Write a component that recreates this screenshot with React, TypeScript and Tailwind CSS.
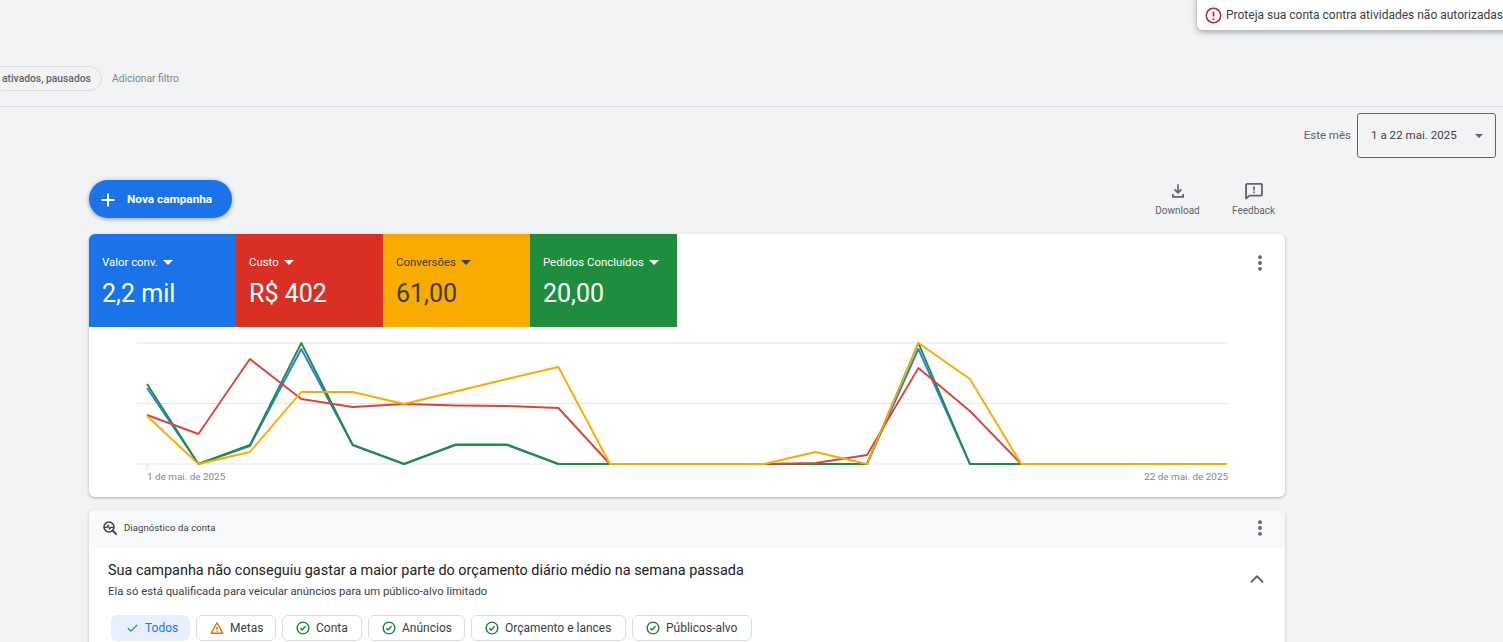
import React from "react";
import { Check, ChevronUp, MoreVertical, Plus } from "lucide-react";

const W = 51.4286;
const xs = Array.from({ length: 22 }, (_, i) => 147 + i * W);
const tail = (n: number) => Array.from({ length: n }, () => 464);
const series: { c: string; y: number[] }[] = [
  { c: "#2b7de9", y: [388, 464, 446, 349, 445, 464, 445, 445, 464, 464, 464, 464, 464, 464, 464, 349, 464, ...tail(5)] },
  { c: "#1e8e3e", y: [384, 464, 445, 343, 445, 464, 444.5, 444.5, 464, 464, 464, 464, 464, 464, 464, 343, 464, ...tail(5)] },
  { c: "#d9453a", y: [415, 434, 359, 399, 407, 404, 405.5, 406, 408, 464, 464, 464, 464, 463, 455, 368, 411, ...tail(5)] },
  { c: "#f9ab00", y: [416, 464, 452, 392, 392, 404, 391.5, 379, 367, 464, 464, 464, 464, 452, 464, 343, 379, ...tail(5)] },
];

function Tile({ label, value, bg, dark }: { label: string; value: string; bg: string; dark?: boolean }) {
  return (
    <div className={`w-[147px] h-[93px] pl-[13px] pt-[21px] ${bg} ${dark ? "text-[#3c4043]" : "text-white"}`}>
      <div className="flex items-center h-[14px] text-[11.4px] leading-[14px]">
        {label}
        <span className={`ml-[5px] w-0 h-0 border-x-[5px] border-x-transparent border-t-[5px] ${dark ? "border-t-[#3c4043]" : "border-t-white"}`} />
      </div>
      <div className="mt-[9px] text-[25px] leading-[32px]">{value}</div>
    </div>
  );
}

function CircleCheck() {
  return (
    <svg width="14" height="14" viewBox="0 0 24 24" fill="none" stroke="#188038" strokeWidth="2.4" className="shrink-0">
      <circle cx="12" cy="12" r="10" />
      <path d="M7.5 12.5l3 3 6-6.5" />
    </svg>
  );
}

function Chip({ label, icon, width }: { label: string; icon: React.ReactNode; width: string }) {
  return (
    <div className={`h-[26px] ${width} pl-[13px] flex items-center gap-[6px] bg-white border border-[#dadce0] rounded-[6px] text-[12px] text-[#3c4043] whitespace-nowrap`}>
      {icon}
      {label}
    </div>
  );
}

export default function App() {
  return (
    <div className="relative w-[1503px] h-[642px] overflow-hidden bg-[#f1f3f4] text-[#3c4043]" style={{ fontFamily: "Roboto, sans-serif" }}>
      {/* toast */}
      <div className="absolute left-[1197px] -top-[10px] w-[330px] h-[40px] pt-[10px] bg-white rounded-[6px] shadow-[0_2px_6px_rgba(60,64,67,0.45)] flex items-center pl-[8px]">
        <svg width="17" height="17" viewBox="0 0 24 24" fill="none" className="shrink-0">
          <circle cx="12" cy="12" r="10.2" stroke="#c5221f" strokeWidth="2.2" />
          <path d="M12 6.5v7" stroke="#c5221f" strokeWidth="2.4" />
          <circle cx="12" cy="16.8" r="1.4" fill="#c5221f" />
        </svg>
        <span className="ml-[4px] text-[12px] text-[#3c4043] whitespace-nowrap">Proteja sua conta contra atividades não autorizadas</span>
      </div>

      {/* filter bar */}
      <div className="h-[107px] border-b border-[#dadce0] pt-[66px]">
        <div className="flex items-center h-[25px]">
          <div className="-ml-[10px] h-[25px] w-[112px] pl-[11px] flex items-center border border-[#dadce0] rounded-full text-[10.3px] font-medium text-[#5f6368] whitespace-nowrap">
            ativados, pausados
          </div>
          <span className="ml-[10px] text-[10.3px] text-[#80868b]">Adicionar filtro</span>
        </div>
      </div>

      {/* date row */}
      <div className="h-[51px] pt-[6px] pr-[7px] flex justify-end items-start">
        <span className="mt-[15px] mr-[6px] text-[11.5px] leading-[14px] text-[#5f6368]">Este mês</span>
        <div className="w-[139px] h-[45px] pl-[13px] pr-[12px] flex items-center justify-between border border-[#5f6368] rounded-[3px] text-[11.5px] text-[#3c4043] tracking-[0.05px]">
          1 a 22 mai. 2025
          <span className="w-0 h-0 border-x-[4px] border-x-transparent border-t-[4px] border-t-[#5f6368]" />
        </div>
      </div>

      <div className="w-[1196px] ml-[89px]">
        {/* actions */}
        <div className="h-[76px] pt-[22px] flex justify-between items-start">
          <button className="w-[143px] h-[38px] pl-[9px] pt-[1px] flex items-center gap-[9px] bg-[#1a73e8] rounded-full text-white text-[11.8px] font-bold shadow-[0_1px_4px_rgba(60,64,67,0.5)]">
            <Plus size={20} strokeWidth={2.4} />
            Nova campanha
          </button>
          <div className="flex gap-[31px] pr-[9px] pt-[2px] text-[#5f6368]">
            <div className="flex flex-col items-center w-[45px]">
              <svg width="18" height="18" viewBox="0 0 24 24" fill="#5f6368">
                <path d="M12 16 6.500 10.500l1.600-1.600 2.750 2.750V3h2.300v8.650l2.750-2.750 1.600 1.600L12 16ZM4 21v-5h2.300v2.700h11.400V16H20v5H4Z" />
              </svg>
              <span className="mt-[4px] text-[10px] leading-[14px]">Download</span>
            </div>
            <div className="flex flex-col items-center w-[45px]">
              <svg width="20" height="20" viewBox="0 0 24 24" fill="none" className="-mt-[1px]">
                <path d="M3.500 3.500h17a1 1 0 0 1 1 1v12a1 1 0 0 1-1 1H6.500l-4 3.500V4.500a1 1 0 0 1 1-1Z" stroke="#5f6368" strokeWidth="2.200" strokeLinejoin="round" />
                <path d="M11 6.500h2v5h-2v-5Zm0 6.200h2v2h-2v-2Z" fill="#5f6368" />
              </svg>
              <span className="mt-[3px] text-[10px] leading-[14px]">Feedback</span>
            </div>
          </div>
        </div>

        {/* chart card */}
        <div className="relative h-[263px] bg-white rounded-[6px] overflow-hidden shadow-[0_1px_3px_rgba(60,64,67,0.4)]">
          <div className="flex">
            <Tile label="Valor conv." value="2,2 mil" bg="bg-[#1a73e8]" />
            <Tile label="Custo" value="R$ 402" bg="bg-[#d93025]" />
            <Tile label="Conversões" value="61,00" bg="bg-[#f9ab00]" dark />
            <Tile label="Pedidos Concluídos" value="20,00" bg="bg-[#1e8e3e]" />
            <div className="flex-1 flex justify-end pt-[19px] pr-[15px]">
              <MoreVertical size={20} strokeWidth={2.6} className="text-[#5f6368]" />
            </div>
          </div>
          <svg width="1196" height="170" viewBox="89 327 1196 170" className="block" fill="none">
            {[343, 403.5, 464].map((y) => (
              <line key={y} x1="137" x2="1227" y1={y} y2={y} stroke="#e3e5e8" strokeWidth="1" />
            ))}
            <line x1="147" x2="147" y1="464" y2="470" stroke="#dadce0" />
            {series.map((s) => (
              <polyline
                key={s.c}
                points={s.y.map((y, i) => `${xs[i].toFixed(1)},${y}`).join(" ")}
                stroke={s.c}
                strokeWidth="1.9"
                strokeLinejoin="round"
              />
            ))}
          </svg>
          <div className="absolute left-[58px] right-[57px] top-[236px] flex justify-between text-[9.9px] leading-[14px] text-[#80868b]">
            <span>1 de mai. de 2025</span>
            <span>22 de mai. de 2025</span>
          </div>
        </div>

        {/* diagnostics card */}
        <div className="mt-[13px] h-[200px] bg-white rounded-t-[6px] shadow-[0_1px_3px_rgba(60,64,67,0.3)]">
          <div className="h-[38px] pl-[13px] pr-[15px] pb-[2px] flex items-center bg-[#f8f9fa] rounded-t-[6px]">
            <svg width="16" height="16" viewBox="0 0 24 24" fill="none" stroke="#3c4043" strokeWidth="2.400">
              <circle cx="10.500" cy="10.500" r="7.500" />
              <path d="M16 16l6 6" strokeWidth="3" />
              <path d="M4 11h3.500l1.500-3 2.500 5.500 1.500-2.500h3.500" strokeWidth="1.800" />
            </svg>
            <span className="ml-[6px] text-[9.5px] text-[#3c4043] tracking-[0.1px]">Diagnóstico da conta</span>
            <MoreVertical size={20} strokeWidth={2.6} className="ml-auto text-[#5f6368]" />
          </div>
          <div className="relative pl-[19px] pt-[14px]">
            <div className="text-[14.43px] leading-[18px] text-[#202124]">Sua campanha não conseguiu gastar a maior parte do orçamento diário médio na semana passada</div>
            <div className="mt-[5px] text-[11.3px] leading-[14px] text-[#3c4043]">Ela só está qualificada para veicular anúncios para um público-alvo limitado</div>
            <ChevronUp size={22} strokeWidth={2} className="absolute right-[17px] top-[20px] text-[#5f6368]" />
            <div className="mt-[16px] ml-[3px] flex gap-[6px]">
              <div className="h-[26px] w-[79px] pl-[15px] flex items-center gap-[6px] bg-[#e8f0fe] rounded-[6px] text-[12px] text-[#1a73e8]">
                <Check size={13} strokeWidth={2} />
                Todos
              </div>
              <Chip
                width="w-[80px]"
                label="Metas"
                icon={
                  <svg width="14" height="14" viewBox="0 0 24 24" fill="none" stroke="#e37400" strokeWidth="2.400" className="shrink-0">
                    <path d="M12 3 22 21H2L12 3Z" strokeLinejoin="round" />
                    <path d="M12 10v5.500M12 17v2" />
                  </svg>
                }
              />
              <Chip width="w-[80px]" label="Conta" icon={<CircleCheck />} />
              <Chip width="w-[97px]" label="Anúncios" icon={<CircleCheck />} />
              <Chip width="w-[155px]" label="Orçamento e lances" icon={<CircleCheck />} />
              <Chip width="w-[120px]" label="Públicos-alvo" icon={<CircleCheck />} />
            </div>
          </div>
        </div>
      </div>
    </div>
  );
}
